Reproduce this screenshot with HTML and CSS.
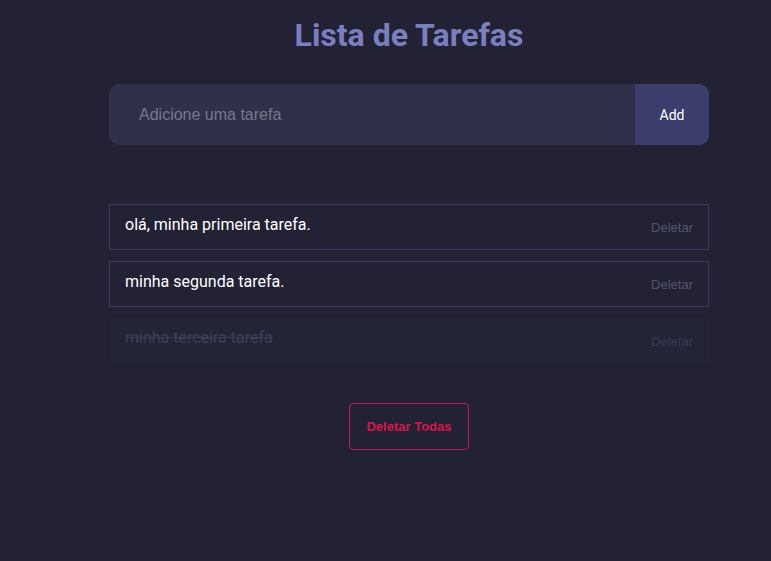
FILE: index.html
```html
<!DOCTYPE html>
<html lang="pt">
<head>
<meta charset="utf-8">
<title>Lista de Tarefas</title>
<link rel="stylesheet" href="styles.css">
</head>
<body>
<main class="app">
  <h1 class="title">Lista de Tarefas</h1>
  <form class="add-form">
    <input class="add-input" type="text" placeholder="Adicione uma tarefa">
    <button class="add-btn" type="button">Add</button>
  </form>
  <ul class="tasks">
    <li class="task"><span class="task-text">olá, minha primeira tarefa.</span><button class="del" type="button">Deletar</button></li>
    <li class="task"><span class="task-text">minha segunda tarefa.</span><button class="del" type="button">Deletar</button></li>
    <li class="task done"><span class="task-text">minha terceira tarefa</span><button class="del" type="button">Deletar</button></li>
  </ul>
  <div class="footer">
    <button class="del-all" type="button">Deletar Todas</button>
  </div>
</main>
</body>
</html>
```
FILE: styles.css
```css
html, body {
  margin: 0;
  padding: 0;
  background: #222234;
  height: 100%;
}
body {
  font-family: Roboto, "Liberation Sans", sans-serif;
}
.app {
  width: 600px;
  margin-left: 109px;
  display: flex;
  flex-direction: column;
}
.title {
  margin: 14px 0 0;
  height: 42px;
  line-height: 42px;
  text-align: center;
  font-size: 32px;
  font-weight: 700;
  color: #7a7fc0;
}
.add-form {
  margin-top: 28px;
  display: flex;
  height: 61px;
  border-radius: 10px;
  overflow: hidden;
  background: #30304a;
}
.add-input {
  flex: 1;
  border: none;
  outline: none;
  background: transparent;
  padding: 0 0 0 30px;
  font-family: "Liberation Sans", Arial, sans-serif;
  font-size: 16px;
  color: #ddd;
}
.add-input::placeholder {
  color: #77778c;
}
.add-btn {
  width: 74px;
  border: none;
  background: #3b3d6c;
  color: #fff;
  font-family: Roboto, "Liberation Sans", sans-serif;
  font-size: 14px;
  font-weight: 400;
  padding: 0;
}
.tasks {
  list-style: none;
  margin: 59px 0 0;
  padding: 0;
  display: flex;
  flex-direction: column;
  gap: 11px;
}
.task {
  height: 46px;
  box-sizing: border-box;
  border: 1px solid #3a3b5e;
  display: flex;
  align-items: center;
  justify-content: space-between;
  padding: 0 15px 0 15px;
}
.task-text {
  color: #fff;
  font-size: 16px;
  margin-top: -6px;
}
.del {
  border: none;
  background: transparent;
  padding: 0;
  font-family: "Liberation Sans", Arial, sans-serif;
  font-size: 13px;
  color: #525473;
  margin-top: 1px;
}
.task.done {
  border-color: transparent;
  background: #242437;
}
.task.done .task-text {
  color: #3c3e5a;
  text-decoration: line-through;
  margin-top: -8px;
}
.task.done .del {
  color: #393b55;
}
.footer {
  display: flex;
  justify-content: center;
  margin-top: 39px;
}
.del-all {
  width: 120px;
  height: 47px;
  border: 1px solid #c81a4c;
  border-radius: 4px;
  background: transparent;
  color: #d7174b;
  font-family: "Liberation Sans", Arial, sans-serif;
  font-weight: 700;
  font-size: 13px;
  padding: 0;
}
```
